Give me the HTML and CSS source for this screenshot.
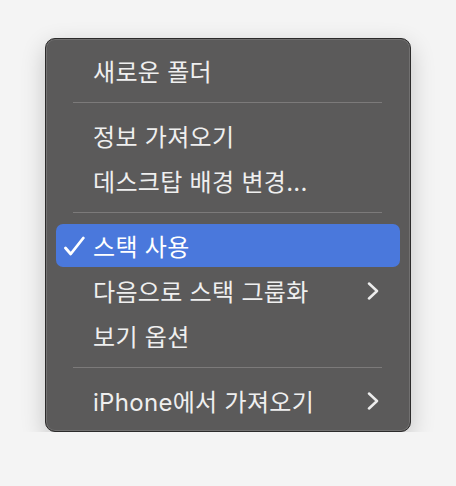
FILE: index.html
```html
<!DOCTYPE html>
<html lang="ko">
<head>
  <meta charset="utf-8">
  <title>Context Menu</title>
  <link rel="stylesheet" href="styles.css">
</head>
<body>
  <div class="menu">
    <div class="item">새로운 폴더</div>
    <div class="separator"></div>
    <div class="item">정보 가져오기</div>
    <div class="item">데스크탑 배경 변경...</div>
    <div class="separator"></div>
    <div class="item active">
      <svg class="check" viewBox="0 0 21 20" width="21" height="20">
        <path d="M1.5 12 L6.7 18 L19.3 2" fill="none" stroke="#fff" stroke-width="2.8" stroke-linecap="round" stroke-linejoin="round"/>
      </svg>
      스택 사용
    </div>
    <div class="item has-sub">다음으로 스택 그룹화
      <svg class="chevron" viewBox="0 0 12 18" width="12" height="18">
        <path d="M2 1.5 L10 9 L2 16.5" fill="none" stroke="#ededed" stroke-width="2.5" stroke-linecap="round" stroke-linejoin="round"/>
      </svg>
    </div>
    <div class="item">보기 옵션</div>
    <div class="separator"></div>
    <div class="item has-sub">iPhone에서 가져오기
      <svg class="chevron" viewBox="0 0 12 18" width="12" height="18">
        <path d="M2 1.5 L10 9 L2 16.5" fill="none" stroke="#ededed" stroke-width="2.5" stroke-linecap="round" stroke-linejoin="round"/>
      </svg>
    </div>
  </div>
</body>
</html>
```

FILE: styles.css
```css
:root {
  --page-bg: #f4f4f4;
  --menu-bg: #5b5a5a;
  --menu-text: #efefef;
  --highlight: #4a78dc;
  --separator: #7c7a7a;
}

* {
  margin: 0;
  padding: 0;
  box-sizing: border-box;
}

body {
  background: var(--page-bg);
  font-family: 'Inter', 'Noto Sans CJK KR', sans-serif;
  padding: 38px 0 0 45px;
}

.menu {
  width: 366px;
  height: 394px;
  background: var(--menu-bg);
  border: 1px solid #2c2b2b;
  border-radius: 10px;
  padding: 9px 10px 8px;
  box-shadow:
    inset 0 0 0 1px rgba(255, 255, 255, 0.14),
    0 8px 24px rgba(0, 0, 0, 0.2);
}

.item {
  position: relative;
  display: flex;
  align-items: center;
  height: 45px;
  padding-left: 37px;
  padding-right: 21px;
  font-size: 24px;
  letter-spacing: 0.3px;
  color: var(--menu-text);
  border-radius: 7px;
  white-space: nowrap;
}

.item.active {
  background: var(--highlight);
  color: #fff;
  margin: 1px 0;
  height: 43px;
}

.check {
  position: absolute;
  left: 8px;
  top: 12px;
}

.chevron {
  margin-left: auto;
}

.separator {
  height: 20px;
  padding: 9px 18px 0 17px;
}

.separator::before {
  content: '';
  display: block;
  height: 1px;
  background: var(--separator);
}
```
